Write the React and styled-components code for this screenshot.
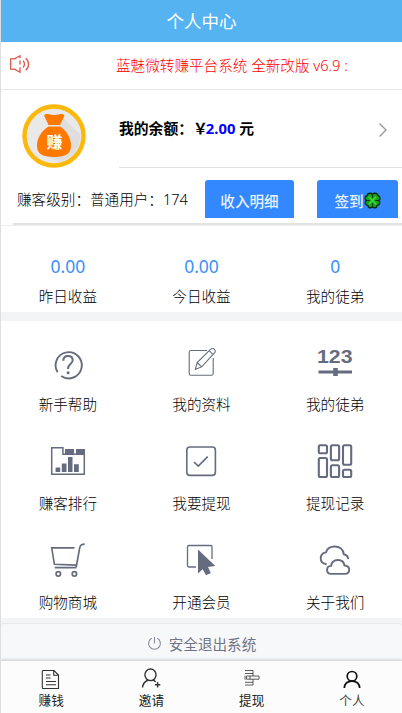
import React from "react";
import styled, { createGlobalStyle } from "styled-components";

const HelpIcon = () => (
	<Icon viewBox="0 0 40 40">
		<path d="M9.6 28.2A13.1 13.1 0 1 1 13.2 32" strokeWidth="1.9" />
		<path d="M15.3 16.8c0-3 1.9-4.9 4.7-4.9s4.7 1.8 4.7 4.4c0 3.5-4.6 4-4.6 7.8v1" strokeWidth="2" />
		<circle cx="20.1" cy="28.8" r="1.5" fill="currentColor" stroke="none" />
	</Icon>
);

const EditIcon = () => (
	<Icon viewBox="0 0 40 40">
		<path d="M26 6.5H10A1.8 1.8 0 0 0 8.2 8.3V29.5a1.8 1.8 0 0 0 1.8 1.8h20.4a1.8 1.8 0 0 0 1.8-1.8V14" strokeWidth="1.1" />
		<path d="M14.3 25.3l1.9-6.8L29.7 5.2a2.5 2.5 0 0 1 3.7.1 2.5 2.5 0 0 1 .1 3.7L20.6 22.9zM16.2 18.5l4.4 4.4M28.2 6.7l3.9 3.9" strokeWidth="1.1" />
	</Icon>
);

const CountIcon = () => (
	<Icon viewBox="0 0 40 40">
		<IconText x="2" y="18.5" textLength="35.5" lengthAdjust="spacingAndGlyphs">
			123
		</IconText>
		<path d="M3.5 28H37" strokeWidth="3" />
		<path d="M20.5 24v8" strokeWidth="4.6" />
	</Icon>
);

const RankIcon = () => (
	<Icon viewBox="0 0 40 40">
		<path d="M3.7 4.7h11.2v6.6h21.4v19.9H3.7z" strokeWidth="1.5" />
		<path
			d="M17 6h9v5h-9zM28 6h9v5h-9zM7.6 24.4h4.6V29H7.6zM13.8 20.5h4.7V29h-4.7zM20 14h4.5v15H20zM26 21.2h4.8V29H26z"
			fill="currentColor"
			stroke="none"
		/>
	</Icon>
);

const CheckIcon = () => (
	<Icon viewBox="0 0 40 40">
		<rect x="5.8" y="4" width="28.6" height="28.4" rx="3.2" strokeWidth="1.6" />
		<path d="M13 19l4.3 4 9.4-9.4" strokeWidth="1.7" />
	</Icon>
);

const RecordIcon = () => (
	<Icon viewBox="0 0 40 40" $stroke="2.1">
		<rect x="3.8" y="2.2" width="8.2" height="8" rx="1.5" />
		<rect x="3.8" y="15" width="8.2" height="19" rx="1.5" />
		<rect x="15.9" y="2.2" width="8.2" height="15" rx="1.5" />
		<rect x="15.9" y="22.2" width="8.2" height="11.8" rx="1.5" />
		<rect x="28" y="2.2" width="8.2" height="19.6" rx="1.5" />
		<rect x="28" y="26.7" width="8.2" height="7.3" rx="1.5" />
	</Icon>
);

const CartIcon = () => (
	<Icon viewBox="0 0 40 40">
		<path d="M26.5 5.9H3.7l2.7 16.3 21.8.9" strokeWidth="1.6" />
		<path d="M36.7 2.2c-3.5 0-4.4.8-5 3.6L28.2 25M6.7 25.7h21.8" strokeWidth="1.7" />
		<circle cx="10.3" cy="31.9" r="2.2" strokeWidth="1.7" />
		<circle cx="26.4" cy="31.9" r="2.2" strokeWidth="1.7" />
	</Icon>
);

const CursorIcon = () => (
	<Icon viewBox="0 0 40 40">
		<path d="M15 25H8a1.5 1.5 0 0 1-1.5-1.5V5A1.5 1.5 0 0 1 8 3.5h21.7A1.3 1.3 0 0 1 31 4.8V17" strokeWidth="1.3" />
		<path d="M17 7.5v24l4.7-4.2 3.3 6 4.8-2.2-2.8-6 7.3-1z" fill="currentColor" stroke="none" />
	</Icon>
);

const CloudIcon = () => (
	<Icon viewBox="0 0 40 40" $stroke="1.9">
		<path d="M11.6 22.3C8 21.6 5.7 19.6 5.7 16.5c0-3.3 2-5.6 5.2-6.1C12 6.6 15.3 4.5 19.6 4.5c5 0 8.8 3 9.2 7.8 2.6.5 4.1 2 4.5 4.9" />
		<path d="M16.3 31.9c-2.5 0-4.2-1.5-4.2-3.9s1.6-4 4-4.1c.5-3.6 3.3-5.9 6.9-5.9s6 2.3 6.5 5.5c3 .1 4.7 1.7 4.7 4.3 0 2.5-1.8 4.1-4.4 4.1z" />
	</Icon>
);

const SpeakerIcon = () => (
	<SpeakerSvg viewBox="0 0 22 20">
		<path d="M12 4.3V1.8L6.5 4.8H2.7v10.4h3.8l5.5 3v-5M12 6.5v4" />
		<path d="M15 6.7c2 1.7 2 5.1 0 6.7M17.7 4.2c3.8 3 3.8 9.2 0 12.1" />
	</SpeakerSvg>
);

const MoneyBag = () => (
	<AvatarSvg viewBox="0 0 64 64">
		<circle cx="32" cy="32" r="29.5" fill="#e9e9e9" stroke="#fdb80c" strokeWidth="4.4" />
		<path d="M42 15l16 15a26 26 0 0 1-20 28L20 50z" fill="#dedede" />
		<path
			d="M23 13.5c-2-2.5.5-4 3.5-3.2 3.5 1 7.5.9 11 0 3.5-.8 6 1 4 3.5L38 21H26.5zM26.5 22.5H38C45 27 49 34 49 41.5c0 8-5 11.5-17 11.5s-17-3.5-17-11.5C15 34 19.5 27 26.5 22.5z"
			fill="#ff7800"
		/>
		<BagText x="32.5" y="43.5">
			赚
		</BagText>
	</AvatarSvg>
);

const Clover = () => (
	<CloverSvg viewBox="0 0 18 18">
		<path
			d="M9 2.5C7.500.5 3.500 1 3 4 .5 4.5.5 8 2.500 9 .5 10.5 1 14 4 14.200c.5 3 3.500 3.300 5 1.300 1.500 2 4.500 1.700 5-1.300 3-.2 3.500-3.700 1.500-5.200 2-1 2-4.500-.5-5-.5-3-4.500-3.500-6-1.500z"
			fill="#14a51c"
			stroke="#0b2e10"
			strokeWidth="1.5"
		/>
		<path d="M9 2.5V6M9 12v4M2.5 9H6M12 9h3.5" stroke="#0b2e10" strokeWidth="1" />
		<path d="M5 5l8 8M13 5l-8 8" stroke="#4be03c" strokeWidth="1.3" />
	</CloverSvg>
);

const PowerIcon = () => (
	<PowerSvg viewBox="0 0 16 16">
		<path d="M5 2.4a6.3 6.3 0 1 0 6 0M8 1v7" />
	</PowerSvg>
);

const ArticleIcon = () => (
	<TabIcon viewBox="0 0 24 24">
		<path d="M4.2 2.5H15l4.5 4.5v13.5H4.2a.9.9 0 0 1-.9-.9V3.4a.9.9 0 0 1 .9-.9zM14.7 2.5v4.800h4.800M7 7h4.5M7 10h4.5M7 13.5h10M7 16.7h10" />
	</TabIcon>
);

const InviteIcon = () => (
	<TabIcon viewBox="0 0 24 24" $stroke="1.4">
		<ellipse cx="11.5" cy="6.8" rx="5.6" ry="5.8" />
		<path d="M3.5 19.5c.3-4 2.3-6 5.7-7.5M14 12c1.200.5 2 1.100 2.700 1.900M18.600 14v5.400M16 16.700h5.300" />
	</TabIcon>
);

const WithdrawIcon = () => (
	<TabIcon viewBox="0 0 24 24" $stroke=".8">
		<path d="M5 2.5h8v3H5M5 14.3h8V17H5M10 8h9v3.2h-9zM10 8H6.5v3.2H10M5 7.7v4M13 5.5V8M13 11.2v3" />
	</TabIcon>
);

const PersonIcon = () => (
	<TabIcon viewBox="0 0 24 24" $stroke="1.7" $color="#111">
		<circle cx="12" cy="8.3" r="4.8" />
		<path d="M4.3 20c.3-4.3 3-6.9 7.7-6.9s7.4 2.6 7.7 6.9" />
	</TabIcon>
);

const stats = [
	{ value: "0.00", label: "昨日收益" },
	{ value: "0.00", label: "今日收益" },
	{ value: "0", label: "我的徒弟" },
];

const menu = [
	{ icon: HelpIcon, label: "新手帮助" },
	{ icon: EditIcon, label: "我的资料" },
	{ icon: CountIcon, label: "我的徒弟" },
	{ icon: RankIcon, label: "赚客排行" },
	{ icon: CheckIcon, label: "我要提现" },
	{ icon: RecordIcon, label: "提现记录" },
	{ icon: CartIcon, label: "购物商城" },
	{ icon: CursorIcon, label: "开通会员" },
	{ icon: CloudIcon, label: "关于我们" },
];

const tabs = [
	{ icon: ArticleIcon, label: "赚钱" },
	{ icon: InviteIcon, label: "邀请" },
	{ icon: WithdrawIcon, label: "提现" },
	{ icon: PersonIcon, label: "个人", active: true },
];

const App = () => {
	return (
		<>
			<GlobalStyle />
			<Page>
				<Header>个人中心</Header>
				<Notice>
					<SpeakerIcon />
					<Marquee>蓝魅微转赚平台系统 全新改版 v6.9 :</Marquee>
				</Notice>
				<Profile>
					<MoneyBag />
					<Balance>
						<span>
							我的余额：￥<Amount>2.00</Amount> 元
						</span>
						<Chevron viewBox="0 0 10 16">
							<path d="M1.5 1.5L8 8l-6.5 6.5" />
						</Chevron>
					</Balance>
				</Profile>
				<LevelRow>
					<Level>赚客级别：普通用户：174</Level>
					<ActionButton $width="89px">收入明细</ActionButton>
					<ActionButton $width="81px">
						签到
						<Clover />
					</ActionButton>
				</LevelRow>
				<Stats>
					{stats.map((stat, i) => (
						<Stat key={i}>
							<StatValue>{stat.value}</StatValue>
							<Label>{stat.label}</Label>
						</Stat>
					))}
				</Stats>
				<Menu>
					{menu.map(({ icon: ItemIcon, label }, i) => (
						<MenuItem key={i}>
							<ItemIcon />
							<Label>{label}</Label>
						</MenuItem>
					))}
				</Menu>
				<Logout>
					<PowerIcon />
					安全退出系统
				</Logout>
				<TabBar>
					{tabs.map(({ icon: ItemIcon, label, active }, i) => (
						<Tab key={i} $active={active}>
							<ItemIcon />
							{label}
						</Tab>
					))}
				</TabBar>
			</Page>
		</>
	);
};

export default App;

const GlobalStyle = createGlobalStyle`
	* {
		box-sizing: border-box;
	}
	body {
		margin: 0;
		background: #f3f4f6;
		font-family: "Noto Sans", "Noto Sans CJK SC", sans-serif;
		font-size: 14.6px;
		font-weight: 300;
		color: #000;
	}
	svg {
		display: block;
		flex-shrink: 0;
		fill: none;
	}
`;

const Page = styled.div`
	display: flex;
	flex-direction: column;
	width: 402px;
	height: 713px;
	overflow: hidden;
	border-left: 1px solid #dfdfdf;
`;

const Header = styled.header`
	height: 42px;
	background: #54b3f0;
	color: #fff;
	font-size: 17.5px;
	font-weight: 400;
	line-height: 42px;
	text-align: center;
`;

const Notice = styled.div`
	display: flex;
	align-items: center;
	height: 48px;
	padding: 0 55px 2px 7px;
	background: #fff;
	border-bottom: 1px solid #e6e6e6;
`;

const SpeakerSvg = styled.svg`
	width: 22px;
	height: 20px;
	margin-top: -2px;
	stroke: #d8584a;
	stroke-width: 1.3;
`;

const Marquee = styled.div`
	flex: 1;
	margin-left: 86px;
	color: #f00;
	line-height: 24px;
	white-space: nowrap;
	overflow: hidden;
`;

const Profile = styled.section`
	display: flex;
	height: 78px;
	padding-left: 21px;
	background: #fff;
`;

const AvatarSvg = styled.svg`
	width: 64px;
	height: 64px;
	margin-top: 14px;
`;

const BagText = styled.text`
	fill: #fff;
	font-size: 16px;
	font-weight: 700;
	text-anchor: middle;
`;

const Balance = styled.div`
	flex: 1;
	display: flex;
	align-items: center;
	justify-content: space-between;
	margin-left: 33px;
	padding: 0 14px 2px 0;
	border-bottom: 1px solid #e2e2e2;
	font-size: 14.8px;
	font-weight: 700;
`;

const Amount = styled.span`
	margin-left: -2px;
	color: #00f;
`;

const Chevron = styled.svg`
	width: 10px;
	height: 16px;
	margin-top: 5px;
	stroke: #999;
	stroke-width: 1.4;
`;

const LevelRow = styled.div`
	display: flex;
	align-items: center;
	height: 57px;
	padding: 6px 4px 2px 16px;
	background: linear-gradient(#e2e2e2, #e2e2e2) 12px 100% / 100% 2px no-repeat #fff;
`;

const Level = styled.span`
	flex: 1;
	white-space: nowrap;
`;

const ActionButton = styled.button`
	display: flex;
	align-items: center;
	justify-content: center;
	width: ${(props) => props.$width};
	height: 38px;
	padding: 3px 0 0;
	border: 0;
	border-radius: 3px 3px 0 0;
	background: #3388ff;
	color: #e7f1ff;
	font: inherit;
	font-weight: 500;

	& + & {
		margin-left: 23px;
	}
`;

const CloverSvg = styled.svg`
	width: 17px;
	height: 17px;
`;

const Stats = styled.section`
	display: grid;
	grid-template-columns: repeat(3, 1fr);
	height: 87px;
	padding-top: 27px;
	background: #fff;
	border-top: 1px solid #eee;
`;

const Stat = styled.div`
	display: flex;
	flex-direction: column;
	align-items: center;
	gap: 6px;
`;

const StatValue = styled.span`
	color: #3c91fa;
	font-size: 17.5px;
	font-weight: 400;
	line-height: 26px;
`;

const Label = styled.span`
	line-height: 22px;
`;

const Menu = styled.section`
	display: grid;
	grid-template-columns: repeat(3, 1fr);
	grid-auto-rows: 99px;
	height: 297px;
	margin-top: 9px;
	padding-top: 23px;
	background: #fff;
`;

const MenuItem = styled.div`
	display: flex;
	flex-direction: column;
	align-items: center;
	gap: 9px;
`;

const Icon = styled.svg`
	width: 40px;
	height: 40px;
	color: #666c7f;
	stroke: currentColor;
	stroke-width: ${(props) => props.$stroke || "1.5"};
`;

const IconText = styled.text`
	fill: currentColor;
	stroke: none;
	font-family: "Liberation Sans", sans-serif;
	font-size: 19px;
	font-weight: 700;
`;

const Logout = styled.div`
	display: flex;
	align-items: center;
	justify-content: center;
	gap: 7px;
	height: 37px;
	margin-top: 5px;
	padding-top: 2px;
	background: #f7f8fa;
	border-top: 1px solid #e6e8ea;
	border-radius: 3px 3px 0 0;
	color: #6f7587;
	font-weight: 400;
`;

const PowerSvg = styled.svg`
	width: 15px;
	height: 15px;
	stroke: #858a98;
	stroke-width: 1.1;
`;

const TabBar = styled.nav`
	display: grid;
	grid-template-columns: repeat(4, 1fr);
	height: 53px;
	padding-top: 7px;
	background: #fcfcfc;
	border-top: 1px solid #dcdcdc;
	box-shadow: 0 -1px 2px rgba(0, 0, 0, 0.12);
`;

const Tab = styled.div`
	display: flex;
	flex-direction: column;
	align-items: center;
	color: ${(props) => (props.$active ? "#444" : "#222")};
	font-size: 12.6px;
	font-weight: 400;
	line-height: 18px;
`;

const TabIcon = styled.svg`
	width: 24px;
	height: 24px;
	stroke: ${(props) => props.$color || "#333"};
	stroke-width: ${(props) => props.$stroke || "1.1"};
`;
